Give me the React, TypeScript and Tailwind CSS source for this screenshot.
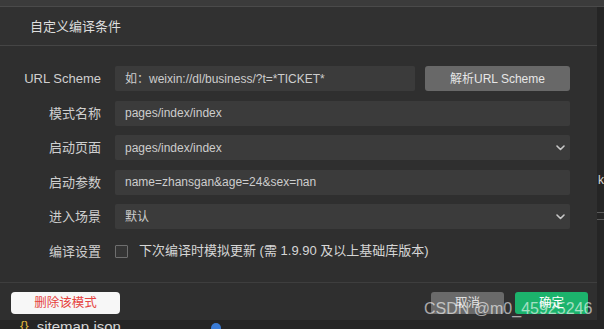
import React from "react";

const Chevron = () => (
  <svg width="9" height="6" viewBox="0 0 9 6" className="shrink-0">
    <polyline points="1,1 4.5,4.5 8,1" fill="none" stroke="#c8c8c8" strokeWidth="1.6" strokeLinecap="round" strokeLinejoin="round" />
  </svg>
);

function Row({ label, children }: { label: string; children: React.ReactNode }) {
  return (
    <div className="flex items-center h-[25px]">
      <div className="w-[101px] text-right text-[13px] text-[#cfcfcf] shrink-0 leading-none">{label}</div>
      <div className="ml-[14px] w-[455px] h-full flex">{children}</div>
    </div>
  );
}

function Input({ text, select }: { text: string; select?: boolean }) {
  return (
    <div className="flex-1 h-full bg-[#3b3b3b] rounded-[2px] flex items-center pl-[10px] pr-[5px] text-[12px] text-[#cdcdcd]">
      <span className="flex-1 truncate">{text}</span>
      {select && <Chevron />}
    </div>
  );
}

export default function App() {
  return (
    <div className="relative w-[604px] h-[329px] overflow-hidden bg-[#262626] flex flex-col font-['Liberation_Sans','Noto_Sans_CJK_SC',sans-serif]">
      <div className="h-[7px] shrink-0 bg-[#3b3b3b] border-b border-[#4a4a4a]" />
      <div className="flex h-[313px] shrink-0">
        <div className="w-[597px] bg-[#2f2f2f] flex flex-col">
          <div className="h-[39px] shrink-0 bg-[#313131] border-b border-[#454545] flex items-center pl-[30px] text-[13px] text-[#dedede] font-['Noto_Sans_CJK_SC',sans-serif]">
            自定义编译条件
          </div>
          <div className="pt-[20px] flex flex-col gap-[9.5px]">
            <Row label="URL Scheme">
              <Input text="如：weixin://dl/business/?t=*TICKET*" />
              <div className="ml-[10px] w-[145px] h-full bg-[#686868] rounded-[3px] flex items-center justify-center text-[12px] text-[#e6e6e6]">
                解析URL Scheme
              </div>
            </Row>
            <Row label="模式名称">
              <Input text="pages/index/index" />
            </Row>
            <Row label="启动页面">
              <Input text="pages/index/index" select />
            </Row>
            <Row label="启动参数">
              <Input text="name=zhansgan&age=24&sex=nan" />
            </Row>
            <Row label="进入场景">
              <Input text="默认" select />
            </Row>
            <Row label="编译设置">
              <div className="flex items-center h-full">
                <div className="w-[13px] h-[13px] border border-[#6e6e6e] bg-[#353535] rounded-[1px]" />
                <span className="ml-[11px] text-[13px] text-[#d6d6d6] whitespace-nowrap">下次编译时模拟更新 (需 1.9.90 及以上基础库版本)</span>
              </div>
            </Row>
          </div>
          <div className="mt-auto h-[38px] shrink-0 border-t border-[#3e3e3e] flex items-start pt-[9px] pl-[11px] pr-[9px]">
            <div className="w-[109px] h-[22px] bg-[#f7f7f7] rounded-[4px] flex items-center justify-center text-[12.5px] text-[#e64340]">
              删除该模式
            </div>
            <div className="ml-auto w-[73px] h-[22px] bg-[#6a6a6a] rounded-[3px] flex items-center justify-center text-[12.5px] text-[#e0e0e0]">
              取消
            </div>
            <div className="ml-[11px] w-[73px] h-[22px] bg-[#1cb36c] rounded-[3px] flex items-center justify-center text-[12.5px] text-white">
              确定
            </div>
          </div>
        </div>
        <div className="flex-1 bg-[#252525] flex flex-col">
          <div className="h-[167px]" />
          <div className="text-[12px] text-[#d8d8d8] leading-none pl-[1px]">k</div>
          <div className="h-[27px] border-b border-[#5a5a5a]" />
          <div className="h-[7px] border-b border-[#5a5a5a]" />
        </div>
      </div>
      <div className="flex-1 bg-[#252525] flex items-start pl-[20px] overflow-hidden whitespace-nowrap">
        <span className="text-[13px] text-[#e2b93b] leading-none -mt-[1px]">{"{}"}</span>
        <span className="ml-[8px] text-[15px] text-[#d6d6d6] leading-none -mt-[1px]">sitemap.json</span>
        <span className="ml-[90px] w-[10px] h-[10px] shrink-0 rounded-full bg-[#3a7bd5] mt-[3px]" />
      </div>
      <div className="absolute left-[424px] top-[301px] whitespace-nowrap text-[16px] text-white/60 leading-none">
        CSDN @m0_45925246
      </div>
    </div>
  );
}
